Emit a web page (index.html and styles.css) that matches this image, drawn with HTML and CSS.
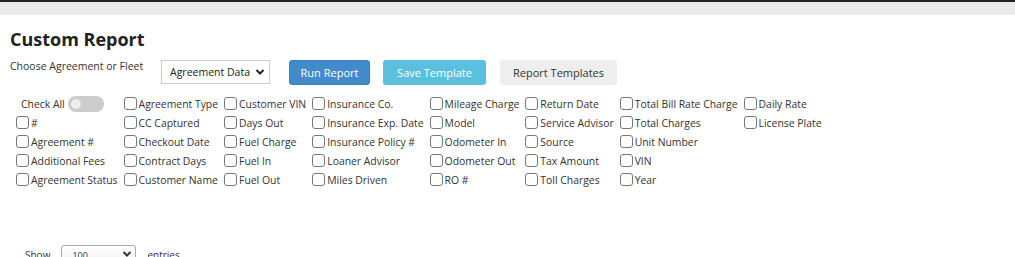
FILE: index.html
```html
<!DOCTYPE html>
<html>
<head>
    <link rel="stylesheet" href="styles.css">
</head>
<body>
    <div class="topbar"></div>

    <div class="report">
        <h1>Custom Report</h1>

        <div class="controls">
            <label class="choose">Choose Agreement or Fleet</label>
            <div class="select-box">
                <span>Agreement Data</span>
                <svg width="10" height="8" viewBox="0 0 10 8"><path d="M1.5 2 L5 5.5 L8.5 2" fill="none" stroke="#222" stroke-width="2"/></svg>
            </div>
            <button class="btn btn-primary">Run Report</button>
            <button class="btn btn-info">Save Template</button>
            <button class="btn btn-default">Report Templates</button>
        </div>

        <div class="fields">
            <div class="field check-all">Check All <span class="toggle"><span class="knob"></span></span></div>
            <label class="field"><span class="box"></span>#</label>
            <label class="field"><span class="box"></span>Agreement #</label>
            <label class="field"><span class="box"></span>Additional Fees</label>
            <label class="field"><span class="box"></span>Agreement Status</label>

            <label class="field"><span class="box"></span>Agreement Type</label>
            <label class="field"><span class="box"></span>CC Captured</label>
            <label class="field"><span class="box"></span>Checkout Date</label>
            <label class="field"><span class="box"></span>Contract Days</label>
            <label class="field"><span class="box"></span>Customer Name</label>

            <label class="field"><span class="box"></span>Customer VIN</label>
            <label class="field"><span class="box"></span>Days Out</label>
            <label class="field"><span class="box"></span>Fuel Charge</label>
            <label class="field"><span class="box"></span>Fuel In</label>
            <label class="field"><span class="box"></span>Fuel Out</label>

            <label class="field"><span class="box"></span>Insurance Co.</label>
            <label class="field"><span class="box"></span>Insurance Exp. Date</label>
            <label class="field"><span class="box"></span>Insurance Policy #</label>
            <label class="field"><span class="box"></span>Loaner Advisor</label>
            <label class="field"><span class="box"></span>Miles Driven</label>

            <label class="field"><span class="box"></span>Mileage Charge</label>
            <label class="field"><span class="box"></span>Model</label>
            <label class="field"><span class="box"></span>Odometer In</label>
            <label class="field"><span class="box"></span>Odometer Out</label>
            <label class="field"><span class="box"></span>RO #</label>

            <label class="field"><span class="box"></span>Return Date</label>
            <label class="field"><span class="box"></span>Service Advisor</label>
            <label class="field"><span class="box"></span>Source</label>
            <label class="field"><span class="box"></span>Tax Amount</label>
            <label class="field"><span class="box"></span>Toll Charges</label>

            <label class="field"><span class="box"></span>Total Bill Rate Charge</label>
            <label class="field"><span class="box"></span>Total Charges</label>
            <label class="field"><span class="box"></span>Unit Number</label>
            <label class="field"><span class="box"></span>VIN</label>
            <label class="field"><span class="box"></span>Year</label>

            <label class="field"><span class="box"></span>Daily Rate</label>
            <label class="field"><span class="box"></span>License Plate</label>
        </div>

        <div class="show-entries">
            Show
            <div class="select-small">
                <span>100</span>
                <svg width="10" height="8" viewBox="0 0 10 8"><path d="M1.5 2 L5 5.5 L8.5 2" fill="none" stroke="#333" stroke-width="2"/></svg>
            </div>
            entries
        </div>
    </div>
</body>
</html>
```

FILE: styles.css
```css
body {
    margin: 0;
    font-family: "Open Sans", Arial, sans-serif;
    color: #333;
    background-color: white;
    overflow: hidden;
}
.topbar {
    height: 13px;
    border-top: 2px solid #222;
    background-color: #ebebeb;
}
.report {
    padding: 0 10px;
}
h1 {
    margin: 12px 0 0 0;
    font-size: 18px;
    font-weight: 700;
    color: #222;
    line-height: 24px;
}
.controls {
    display: flex;
    align-items: flex-start;
    margin-top: 8px;
}
.choose {
    font-size: 10.5px;
    line-height: 14px;
    width: 151px;
}
.select-box {
    border: 1px solid #ccc;
    display: flex;
    align-items: center;
    justify-content: space-between;
    padding: 0 4px 0 8px;
    box-sizing: border-box;
    width: 109px;
    height: 24px;
    font-size: 10.5px;
    color: #222;
    margin-top: 1px;
}
.btn {
    font-family: inherit;
    font-size: 11px;
    height: 25px;
    border: none;
    border-radius: 3px;
    padding: 0;
    margin-top: 1px;
}
.btn-primary {
    background-color: #428bca;
    color: white;
    width: 81px;
    margin-left: 19px;
    border: 1px solid #3a7fbd;
}
.btn-info {
    background-color: #5bc0de;
    color: white;
    width: 103px;
    margin-left: 13px;
}
.btn-default {
    background-color: #eeeeee;
    color: #333;
    width: 117px;
    margin-left: 14px;
}
.fields {
    display: flex;
    flex-direction: column;
    flex-wrap: wrap;
    align-content: flex-start;
    height: 95px;
    column-gap: 6px;
    margin: 9px 0 0 6px;
}
.field {
    display: flex;
    align-items: center;
    height: 19px;
    font-size: 10.4px;
    color: #333;
    white-space: nowrap;
}
.box {
    width: 11px;
    height: 11px;
    border: 1px solid #777;
    border-radius: 3px;
    margin-right: 2px;
    background: white;
}
.check-all {
    padding-left: 5px;
}
.toggle {
    display: inline-block;
    width: 36px;
    height: 16px;
    border-radius: 8px;
    background-color: #ccc;
    margin-left: 3px;
    position: relative;
}
.knob {
    position: absolute;
    left: 3px;
    top: 3px;
    width: 10px;
    height: 10px;
    border-radius: 50%;
    background-color: #eee;
}
.show-entries {
    display: flex;
    align-items: flex-start;
    margin: 60px 0 0 15px;
    font-size: 10px;
    color: #333;
    line-height: 12px;
}
.select-small {
    display: flex;
    justify-content: space-between;
    align-items: flex-start;
    width: 75px;
    height: 24px;
    border: 1px solid #aaa;
    border-radius: 3px;
    box-sizing: border-box;
    margin: -4px 11px 0 11px;
    padding: 4px 3px 0 10px;
    background: linear-gradient(#fff, #eee);
    font-size: 9px;
}
```
